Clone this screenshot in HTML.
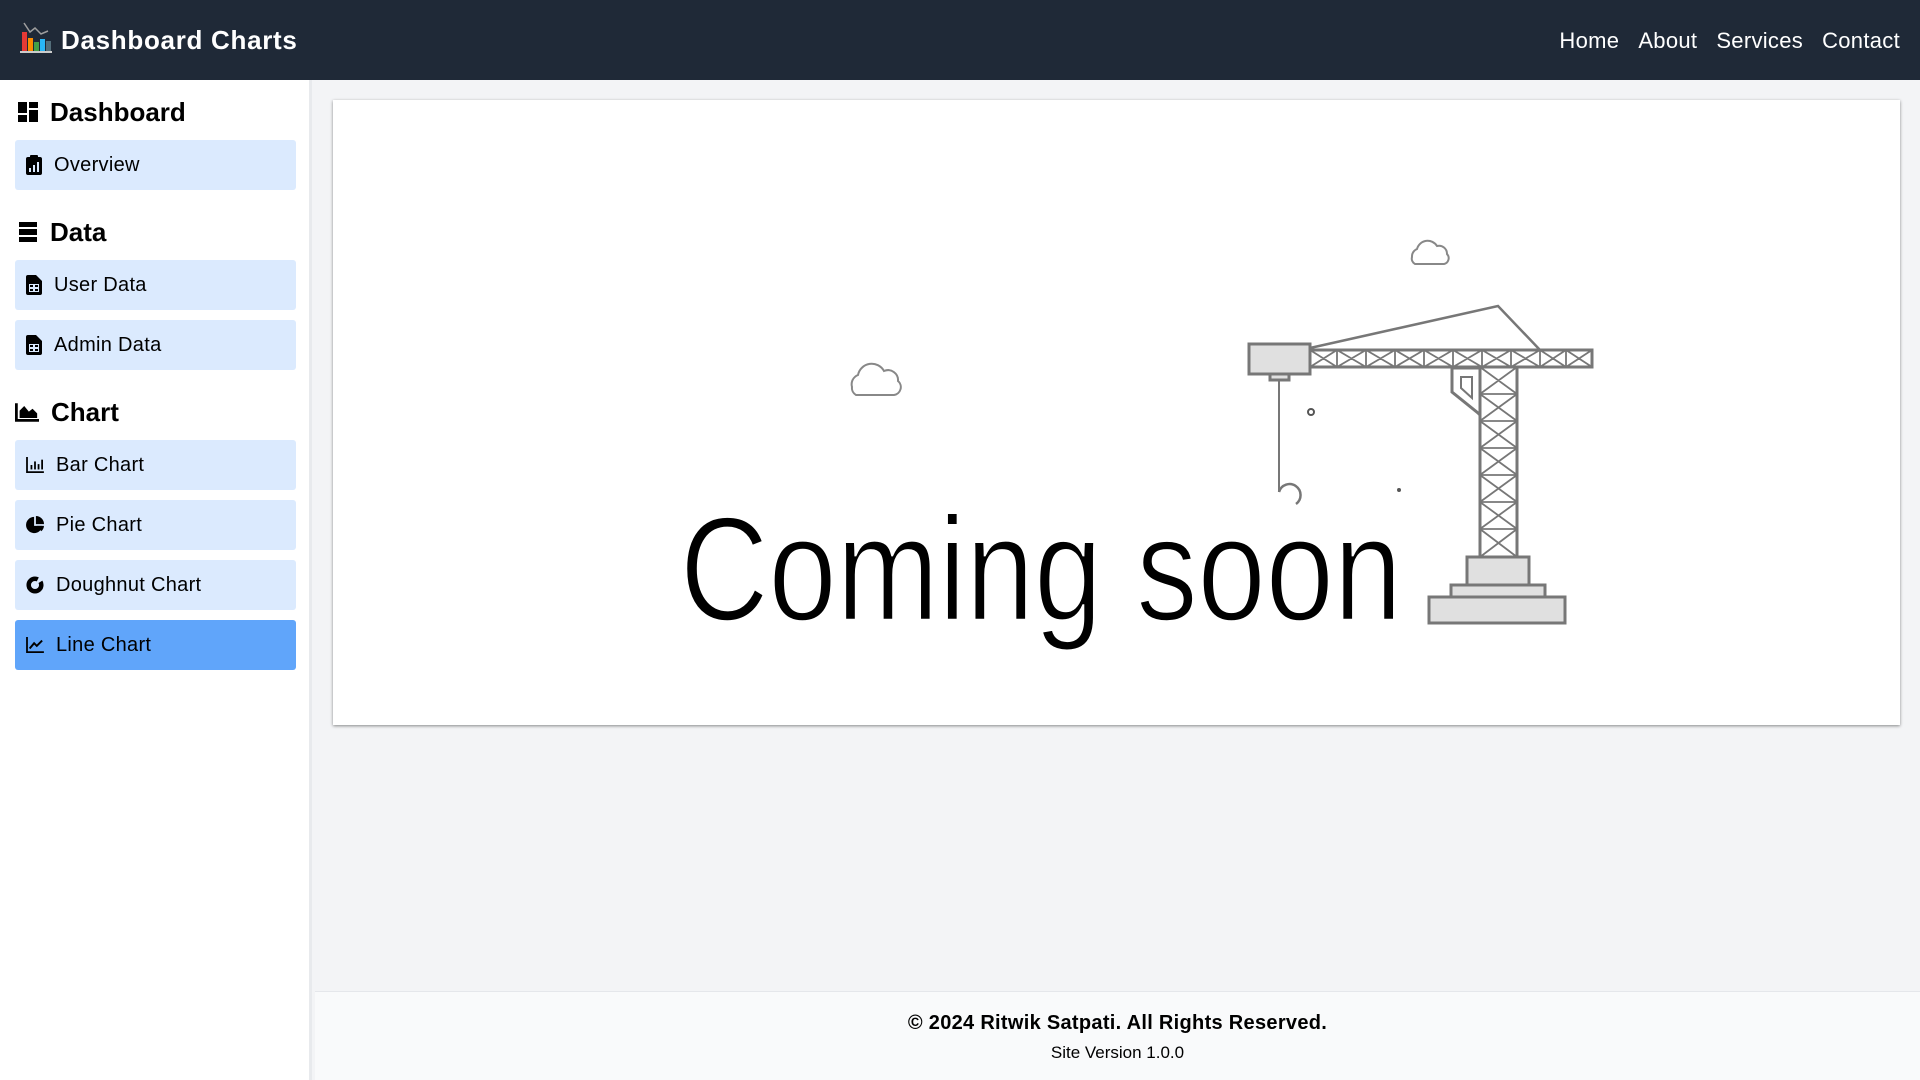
<!DOCTYPE html>
<html><head><meta charset="utf-8"><style>
*{margin:0;padding:0;box-sizing:border-box}
body{width:1920px;height:1080px;overflow:hidden;background:#f3f4f6;font-family:"Liberation Sans",sans-serif;position:relative;color:#000}
.hdr{position:absolute;left:0;top:0;width:1920px;height:80px;background:#1f2937}
.title{position:absolute;left:61px;top:25px;color:#fff;font-weight:bold;font-size:26px;letter-spacing:0.7px}
.nav{position:absolute;right:20px;top:28px;color:#fff;font-size:22px;letter-spacing:0.3px}
.nav span{margin-left:19px}
.side{position:absolute;left:0;top:80px;width:312px;height:1000px;background:#fff;border-right:3px solid #e8eaed}
.h{position:absolute;left:18px;font-size:26px;font-weight:bold;display:flex;align-items:center;height:30px}
.h svg{margin-right:12px}
.it{position:absolute;left:15px;width:281px;height:50px;background:#dbeafe;border-radius:3px;font-size:20px;display:flex;align-items:center;padding-left:11px;letter-spacing:0.3px}
.it svg{margin-right:12px}
.act{background:#60a5fa}
.card{position:absolute;left:333px;top:100px;width:1567px;height:625px;background:#fff;box-shadow:0 1px 3px rgba(0,0,0,.45)}
.foot{position:absolute;left:315px;top:991px;width:1605px;height:89px;background:#f9fafb;border-top:1px solid #e5e7eb;text-align:center}
.c1{font-size:20px;font-weight:bold;margin-top:20px;letter-spacing:0.3px}
.c2{font-size:17px;margin-top:8px}
</style></head><body>
<div class="hdr">
<svg style="position:absolute;left:20px;top:22px" width="32" height="32" viewBox="0 0 32 32">
<rect x="2" y="10" width="5" height="19" fill="#e53935"/><rect x="8" y="16" width="5" height="13" fill="#fb8c00"/><rect x="14" y="20" width="5" height="9" fill="#43a047"/><rect x="20" y="17" width="5" height="12" fill="#29b6f6"/><rect x="26" y="19" width="5" height="10" fill="#546e7a"/>
<polyline points="4,1 10,10 15,6 21,12 28,9" fill="none" stroke="#9e9e9e" stroke-width="1.5"/><rect x="0" y="29" width="32" height="2" fill="#ccc"/></svg>
<div class="title">Dashboard Charts</div>
<div class="nav"><span>Home</span><span>About</span><span>Services</span><span>Contact</span></div>
</div>
<div class="side">
<div class="h" style="top:17px"><svg width="20" height="20" viewBox="0 0 20 20"><rect x="0" y="0" width="9" height="11"/><rect x="11" y="0" width="9" height="6"/><rect x="0" y="13" width="9" height="7"/><rect x="11" y="8" width="9" height="12"/></svg>Dashboard</div>
<div class="it" style="top:60px"><svg width="16" height="20" viewBox="0 0 16 20"><rect x="0" y="2" width="16" height="18" rx="2"/><rect x="4" y="0" width="8" height="4" rx="1"/><rect x="3" y="13" width="2" height="4" fill="#dbeafe"/><rect x="7" y="10" width="2" height="7" fill="#dbeafe"/><rect x="11" y="7" width="2" height="10" fill="#dbeafe"/></svg>Overview</div>
<div class="h" style="top:137px"><svg width="20" height="20" viewBox="0 0 20 20"><rect x="1" y="0" width="18" height="5"/><rect x="1" y="7" width="18" height="6"/><rect x="1" y="15" width="18" height="5"/></svg>Data</div>
<div class="it" style="top:180px"><svg width="16" height="20" viewBox="0 0 16 20"><path d="M0 2a2 2 0 0 1 2-2h8l6 6v12a2 2 0 0 1-2 2H2a2 2 0 0 1-2-2z"/><rect x="3" y="9" width="10" height="8" fill="#dbeafe"/><rect x="4" y="10" width="3" height="2"/><rect x="9" y="10" width="3" height="2"/><rect x="4" y="14" width="3" height="2"/><rect x="9" y="14" width="3" height="2"/></svg>User Data</div>
<div class="it" style="top:240px"><svg width="16" height="20" viewBox="0 0 16 20"><path d="M0 2a2 2 0 0 1 2-2h8l6 6v12a2 2 0 0 1-2 2H2a2 2 0 0 1-2-2z"/><rect x="3" y="9" width="10" height="8" fill="#dbeafe"/><rect x="4" y="10" width="3" height="2"/><rect x="9" y="10" width="3" height="2"/><rect x="4" y="14" width="3" height="2"/><rect x="9" y="14" width="3" height="2"/></svg>Admin Data</div>
<div class="h" style="top:317px;left:15px"><svg width="24" height="19" viewBox="0 0 26 20"><path d="M0 0h3v17h23v3H0z"/><path d="M5 16V8l5-5 5 6 4-3 5 5v5z"/></svg>Chart</div>
<div class="it" style="top:360px"><svg width="18" height="16" viewBox="0 0 20 18"><path d="M0 0h2v16h18v2H0z"/><rect x="5" y="9" width="2" height="5"/><rect x="9" y="5" width="2" height="9"/><rect x="13" y="8" width="2" height="6"/><rect x="17" y="3" width="2" height="11"/></svg>Bar Chart</div>
<div class="it" style="top:420px"><svg width="18" height="18" viewBox="0 0 20 20"><path d="M9 1a9 9 0 1 0 9 10H9z"/><path d="M11 0a9 9 0 0 1 9 9h-9z"/><path d="M12 11h8a9 9 0 0 1-3 6z"/></svg>Pie Chart</div>
<div class="it" style="top:480px"><svg width="18" height="18" viewBox="0 0 20 20"><circle cx="10" cy="10" r="7" fill="none" stroke="#000" stroke-width="5" stroke-dasharray="36 4"/></svg>Doughnut Chart</div>
<div class="it act" style="top:540px"><svg width="18" height="16" viewBox="0 0 20 18"><path d="M0 0h2v16h18v2H0z"/><polyline points="4,13 9,7 12,10 18,4" fill="none" stroke="#000" stroke-width="2.2"/></svg>Line Chart</div>
</div>
<div class="card"></div>
<svg style="position:absolute;left:0;top:0" width="1920" height="1080" viewBox="0 0 1920 1080">
<g fill="none" stroke="#888" stroke-width="2">
<path d="M852 387a10 10 0 0 1 6-12a14 14 0 0 1 26-4a10 10 0 0 1 14 10a8 8 0 0 1-4 14h-38a8 8 0 0 1-4-8z"/>
<path d="M1412 257a8 8 0 0 1 5-8a11 11 0 0 1 20-3a8 8 0 0 1 10 8a6 6 0 0 1-3 10h-29a6 6 0 0 1-3-7z"/>
</g>
<g stroke="#777" stroke-width="3" fill="#e0e0e0">
<polyline points="1310,348 1498,306 1540,350" fill="none" stroke-width="2.5"/>
<rect x="1310" y="350" width="282" height="17" fill="#fff"/>
<rect x="1249" y="344" width="61" height="30"/>
<rect x="1270" y="374" width="19" height="6"/>
<line x1="1279" y1="380" x2="1279" y2="492" stroke-width="2"/>
<path d="M1279 492a11 11 0 1 1 17 12" fill="none" stroke-width="2.5"/>
<circle cx="1311" cy="412" r="3" fill="none" stroke="#555" stroke-width="2"/>
<circle cx="1399" cy="490" r="2" fill="#555" stroke="none"/>
<polygon points="1452,368 1480,368 1480,415 1478,413 1452,392" fill="#fff"/>
<polygon points="1461,377 1472,377 1472,398 1461,388" fill="#fff" stroke-width="2"/>
<rect x="1480" y="367" width="37" height="190" fill="#fff"/>
<rect x="1467" y="557" width="62" height="28"/>
<rect x="1451" y="585" width="94" height="12"/>
<rect x="1429" y="597" width="136" height="26"/>
</g>
<g stroke="#777" stroke-width="1.8" fill="none">
<path d="M1337 350v17M1366 350v17M1395 350v17M1424 350v17M1453 350v17M1482 350v17M1511 350v17M1540 350v17M1566 350v17"/>
<path d="M1310 350l27 17M1337 350l-27 17M1337 350l29 17M1366 350l-29 17M1366 350l29 17M1395 350l-29 17M1395 350l29 17M1424 350l-29 17M1424 350l29 17M1453 350l-29 17M1453 350l29 17M1482 350l-29 17M1482 350l29 17M1511 350l-29 17M1511 350l29 17M1540 350l-29 17M1540 350l26 17M1566 350l-26 17M1566 350l26 17M1592 350l-26 17"/>
<path d="M1480 394h37M1480 421h37M1480 448h37M1480 475h37M1480 502h37M1480 529h37"/>
<path d="M1480 367l37 27M1517 367l-37 27M1480 394l37 27M1517 394l-37 27M1480 421l37 27M1517 421l-37 27M1480 448l37 27M1517 448l-37 27M1480 475l37 27M1517 475l-37 27M1480 502l37 27M1517 502l-37 27M1480 529l37 28M1517 529l-37 28"/>
</g>
<text x="680" y="620" font-family="Liberation Sans, DejaVu Sans, sans-serif" font-size="148" textLength="722" lengthAdjust="spacingAndGlyphs" fill="#000" stroke="#fff" stroke-width="2.5">Coming soon</text>
</svg>
<div class="foot"><div class="c1">© 2024 Ritwik Satpati. All Rights Reserved.</div><div class="c2">Site Version 1.0.0</div></div>
</body></html>
